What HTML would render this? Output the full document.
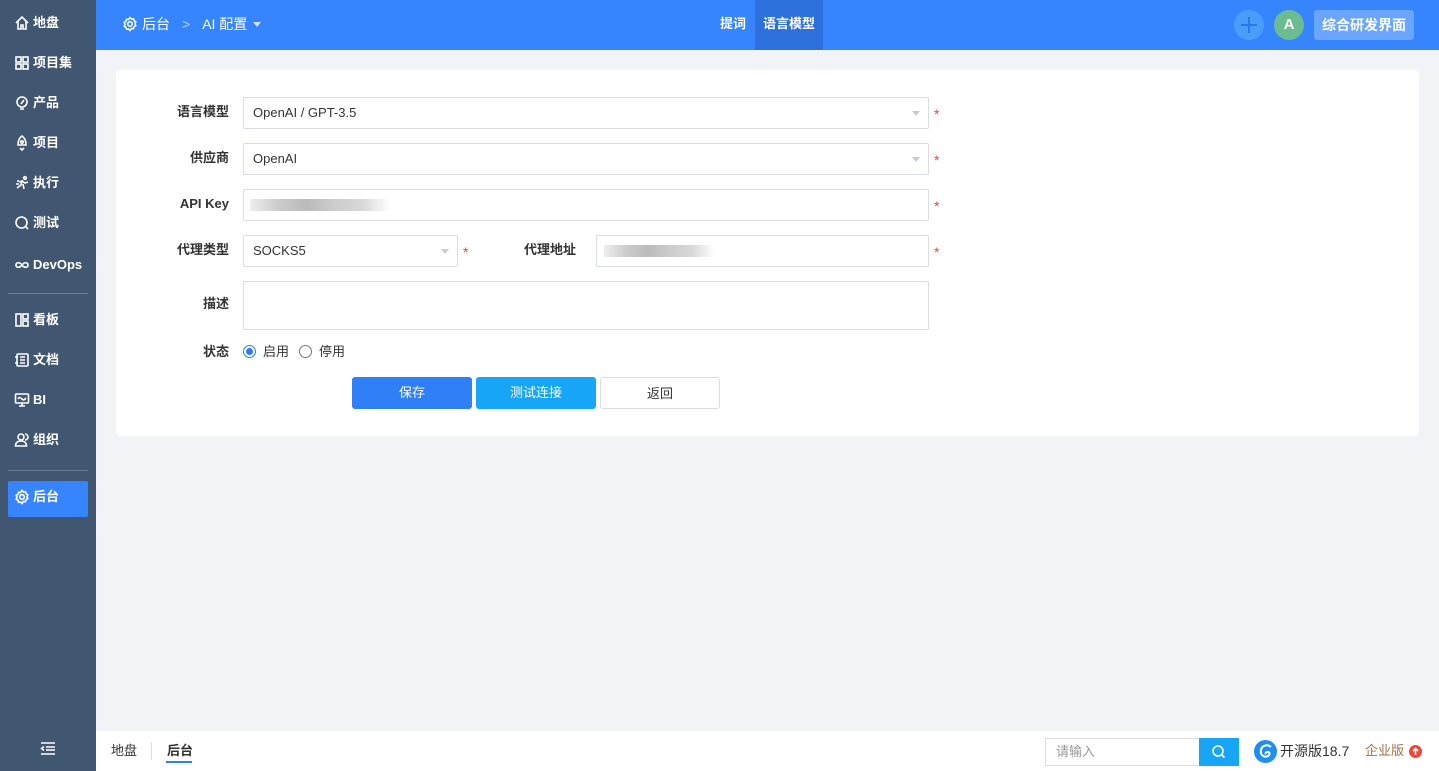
<!DOCTYPE html>
<html><head><meta charset="utf-8"><style>
*{box-sizing:border-box;margin:0;padding:0}
body{width:1439px;height:771px;overflow:hidden;background:#f1f3f6;font-family:"Liberation Sans","Noto Sans CJK SC",sans-serif;font-size:13px;color:#333;position:relative}
.side{position:absolute;left:0;top:0;width:96px;height:771px;background:#415670;color:#fff}
.si{position:absolute;left:14px;height:20px;line-height:20px;display:flex;align-items:center;font-size:13px;font-weight:bold;gap:3px}
.si svg{width:16px;height:16px;stroke:#fff;fill:none;stroke-width:1.6;flex:none}
.div{position:absolute;left:8px;width:80px;height:1px;background:#6a7d93}
.top{position:absolute;left:96px;top:0;right:0;height:50px;background:#3785fe;color:#fff}
.card{position:absolute;left:116px;top:70px;width:1303px;height:366px;background:#fff;border-radius:4px}
.lbl{position:absolute;width:120px;text-align:right;font-weight:bold;font-size:13px;color:#333;line-height:16px}
.inp{position:absolute;height:32px;border:1px solid #d9dce1;border-radius:2px;padding-left:9px;line-height:30px;font-size:13px;color:#333;background:#fff}
.caret{position:absolute;right:8px;top:13px;border:4px solid transparent;border-top:5px solid #c7cbd2}
.star{position:absolute;color:#f0453c;font-size:14px;line-height:14px}
.btn{position:absolute;top:377px;height:32px;width:120px;border-radius:3px;text-align:center;line-height:32px;font-size:13px}
.blur{position:absolute;height:12px;background:linear-gradient(90deg,#eee,#ccc 20%,#bbb 40%,#ccc 60%,#d8d8d8 80%,#fff)}
.foot{position:absolute;left:96px;bottom:0;right:0;height:40px;background:#fff}
</style></head><body>
<div class="side">
<div class="si" style="top:13px"><svg viewBox="0 0 16 16"><path d="M2 8L8 2l6 6M4 6.5V14h3v-4h2v4h3V6.5"/></svg>地盘</div>
<div class="si" style="top:53px"><svg viewBox="0 0 16 16"><rect x="2" y="2" width="5" height="5"/><rect x="9" y="2" width="5" height="5"/><rect x="2" y="9" width="5" height="5"/><rect x="9" y="9" width="5" height="5"/></svg>项目集</div>
<div class="si" style="top:93px"><svg viewBox="0 0 16 16"><circle cx="8" cy="7" r="5"/><path d="M6 14h4M7 9l3-4"/></svg>产品</div>
<div class="si" style="top:133px"><svg viewBox="0 0 16 16"><path d="M8 1c3 2 4 5 4 9H4c0-4 1-7 4-9zM6 13l2 2 2-2"/><circle cx="8" cy="7" r="1.3"/></svg>项目</div>
<div class="si" style="top:173px"><svg viewBox="0 0 16 16"><path d="M3 13l4-3 1-4-3 1M8 6l3 2 3-1M9 9l1 5M2 9h3M3 6h2"/><circle cx="11" cy="3" r="1.3"/></svg>执行</div>
<div class="si" style="top:213px"><svg viewBox="0 0 16 16"><circle cx="7.5" cy="7.5" r="5.5"/><path d="M11 11l3 3"/></svg>测试</div>
<div class="si" style="top:255px"><svg viewBox="0 0 16 16"><path d="M8 8c-2-3-6-3-6 0s4 3 6 0 6-3 6 0-4 3-6 0"/></svg>DevOps</div>
<div class="div" style="top:293px"></div>
<div class="si" style="top:310px"><svg viewBox="0 0 16 16"><rect x="2" y="2" width="5" height="12"/><rect x="9" y="2" width="5" height="5"/><rect x="9" y="9" width="5" height="5"/></svg>看板</div>
<div class="si" style="top:350px"><svg viewBox="0 0 16 16"><rect x="3" y="2" width="11" height="12" rx="1"/><path d="M6 5h5M6 8h5M6 11h5M1 5h3M1 11h3"/></svg>文档</div>
<div class="si" style="top:390px"><svg viewBox="0 0 16 16"><rect x="1.5" y="2" width="13" height="9" rx="1"/><path d="M4 7c1-2 2-2 4 0s3 0 4-1M8 11v3M5 14h6"/></svg>BI</div>
<div class="si" style="top:430px"><svg viewBox="0 0 16 16"><circle cx="7" cy="5" r="3"/><path d="M1.5 14c0-4 3-5 5.5-5s5.5 1 5.5 5zM11 2a3 3 0 0 1 0 6"/></svg>组织</div>
<div class="div" style="top:470px"></div>
<div style="position:absolute;left:8px;top:481px;width:80px;height:36px;background:#3785fe;border-radius:2px"></div>
<div class="si" style="top:487px"><svg viewBox="0 0 16 16"><circle cx="8" cy="8" r="2.3"/><path d="M8 1.5l1.5 1.5 2-.3.5 2 1.8 1-.8 2 .8 2-1.8 1-.5 2-2-.3L8 14.5 6.5 13l-2 .3-.5-2-1.8-1 .8-2-.8-2 1.8-1 .5-2 2 .3z"/></svg>后台</div>
<svg style="position:absolute;left:40px;top:742px" width="16" height="13" viewBox="0 0 16 13" stroke="#fff" stroke-width="1.5" fill="none"><path d="M1 1h14M6 5h9M6 8h9M1 12h14M4 4.5L1.5 6.5 4 8.5"/></svg>
</div>
<div class="top">
<div style="position:absolute;left:26px;top:14px;height:20px;display:flex;align-items:center;gap:4px;font-size:14px"><svg width="16" height="16" viewBox="0 0 16 16" fill="none" stroke="#fff" stroke-width="1.5"><circle cx="8" cy="8" r="2.3"/><path d="M8 1.5l1.5 1.5 2-.3.5 2 1.8 1-.8 2 .8 2-1.8 1-.5 2-2-.3L8 14.5 6.5 13l-2 .3-.5-2-1.8-1 .8-2-.8-2 1.8-1 .5-2 2 .3z"/></svg>后台<span style="margin:0 8px;color:#b8d2ff">&gt;</span>AI 配置<span style="border:4px solid transparent;border-top:5px solid #cfe0ff;margin-top:4px;margin-left:2px"></span></div>
<div style="position:absolute;left:624px;top:0;height:50px;line-height:48px;font-weight:bold;font-size:13px">提词</div>
<div style="position:absolute;left:659px;top:0;width:68px;height:50px;background:#2d6fdb;line-height:48px;text-align:center;font-weight:bold;font-size:13px">语言模型</div>
<div style="position:absolute;left:1138px;top:10px;width:30px;height:30px;border-radius:50%;background:#4a9cf9"><svg width="30" height="30" viewBox="0 0 30 30" stroke="#2b78e0" stroke-width="2"><path d="M15 7v16M7 15h16"/></svg></div>
<div style="position:absolute;left:1178px;top:10px;width:30px;height:30px;border-radius:50%;background:#6bbd91;text-align:center;line-height:30px;font-size:15px;font-weight:bold">A</div>
<div style="position:absolute;left:1218px;top:10px;width:100px;height:30px;border-radius:3px;background:#6aa5ff;text-align:center;line-height:30px;font-size:14px;font-weight:bold">综合研发界面</div>
</div>
<div class="card"></div>
<div class="lbl" style="left:109px;top:104px">语言模型</div>
<div class="inp" style="left:243px;top:97px;width:686px">OpenAI / GPT-3.5<span class="caret"></span></div><span class="star" style="left:934px;top:107px">*</span>
<div class="lbl" style="left:109px;top:150px">供应商</div>
<div class="inp" style="left:243px;top:143px;width:686px">OpenAI<span class="caret"></span></div><span class="star" style="left:934px;top:153px">*</span>
<div class="lbl" style="left:109px;top:196px">API Key</div>
<div class="inp" style="left:243px;top:189px;width:686px"></div><div class="blur" style="left:250px;top:199px;width:140px"></div><span class="star" style="left:934px;top:199px">*</span>
<div class="lbl" style="left:109px;top:242px">代理类型</div>
<div class="inp" style="left:243px;top:235px;width:215px">SOCKS5<span class="caret"></span></div><span class="star" style="left:463px;top:245px">*</span>
<div class="lbl" style="left:456px;top:242px">代理地址</div>
<div class="inp" style="left:596px;top:235px;width:333px"></div><div class="blur" style="left:604px;top:245px;width:110px"></div><span class="star" style="left:934px;top:245px">*</span>
<div class="lbl" style="left:109px;top:296px">描述</div>
<div class="inp" style="left:243px;top:281px;width:686px;height:49px"></div>
<div class="lbl" style="left:109px;top:344px">状态</div>
<div style="position:absolute;left:243px;top:345px;width:13px;height:13px;border-radius:50%;border:1px solid #2b7cf6;background:#fff"><div style="margin:2px;width:7px;height:7px;border-radius:50%;background:#2b7cf6"></div></div>
<span style="position:absolute;left:263px;top:344px;line-height:16px">启用</span>
<div style="position:absolute;left:299px;top:345px;width:13px;height:13px;border-radius:50%;border:1px solid #777;background:#fff"></div>
<span style="position:absolute;left:319px;top:344px;line-height:16px">停用</span>
<div class="btn" style="left:352px;background:#2f80f7;color:#fff">保存</div>
<div class="btn" style="left:476px;background:#17a5f7;color:#fff">测试连接</div>
<div class="btn" style="left:600px;background:#fff;border:1px solid #d9dce1">返回</div>
<div class="foot">
<span style="position:absolute;left:15px;top:12px;line-height:16px">地盘</span>
<div style="position:absolute;left:55px;top:11px;width:1px;height:18px;background:#ddd"></div>
<span style="position:absolute;left:71px;top:12px;font-weight:bold;line-height:16px">后台</span>
<div style="position:absolute;left:70px;top:30px;width:26px;height:2px;background:#2f80f7"></div>
<div style="position:absolute;left:949px;top:7px;width:155px;height:28px;border:1px solid #d9dce1;border-right:none;padding-left:10px;line-height:26px;color:#999">请输入</div>
<div style="position:absolute;left:1103px;top:7px;width:40px;height:28px;background:#17a5f7"><svg width="40" height="28" viewBox="0 0 40 28" fill="none" stroke="#fff" stroke-width="1.6"><circle cx="19" cy="13" r="5"/><path d="M22.5 16.5l3 3"/></svg></div>
<div style="position:absolute;left:1158px;top:9px;width:23px;height:23px;border-radius:50%;background:#1e8ef0"><svg width="23" height="23" viewBox="0 0 23 23" fill="none" stroke="#fff" stroke-width="2"><path d="M17 7c-3-3-9-2-10 3s3 8 7 6c2-1 2-4 0-4s-3 1-2 2"/></svg></div>
<span style="position:absolute;left:1184px;top:12px;font-size:14px;line-height:16px">开源版18.7</span>
<span style="position:absolute;left:1269px;top:12px;color:#a0714a;line-height:16px">企业版</span>
<div style="position:absolute;left:1313px;top:14px;width:13px;height:13px;border-radius:50%;background:#f0453c"><svg width="13" height="13" viewBox="0 0 13 13" stroke="#fff" stroke-width="1.6" fill="none"><path d="M6.5 10V3.5M4 6l2.5-2.5L9 6"/></svg></div>
</div>
</body></html>
